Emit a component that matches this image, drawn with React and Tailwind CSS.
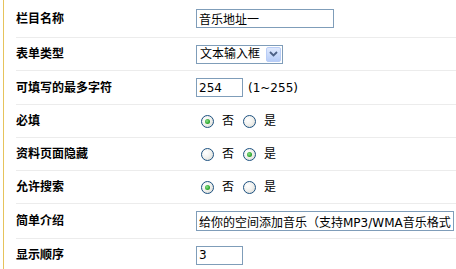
import React from "react";

const FONT = { fontFamily: '"DejaVu Sans", "Noto Sans CJK SC", sans-serif' };

function Radio({ checked }) {
  return (
    <span className="relative inline-block w-[13px] h-[13px] rounded-full border border-[#1c5180] bg-[radial-gradient(circle_at_35%_35%,#ffffff_0%,#f2f2ef_45%,#d6d6cf_100%)] shrink-0">
      {checked && (
        <span className="absolute left-[3px] top-[3px] w-[5px] h-[5px] rounded-full bg-[radial-gradient(circle_at_40%_40%,#8ee08e_0%,#2fa82f_60%,#1d8a1d_100%)]" />
      )}
    </span>
  );
}

function RadioPair({ yes }) {
  return (
    <div className="flex items-center text-[12px] text-black pl-[5px]">
      <Radio checked={!yes} />
      <span className="ml-[8px]">否</span>
      <span className="ml-[9px] flex"><Radio checked={yes} /></span>
      <span className="ml-[8px]">是</span>
    </div>
  );
}

function TextInput({ value, w }) {
  return (
    <input
      readOnly
      value={value}
      className={`h-[19px] border border-[#7f9db9] bg-white px-[2px] text-[12px] text-black outline-none ${w}`}
      style={FONT}
    />
  );
}

function Row({ h, label, children }) {
  return (
    <div className={`flex items-center border-b border-[#ececec] ${h}`}>
      <div className="w-[180px] shrink-0 font-bold text-[12px] text-black">{label}</div>
      <div className="flex items-center min-w-0">{children}</div>
    </div>
  );
}

export default function App() {
  return (
    <div className="w-[456px] h-[269px] overflow-hidden bg-white" style={FONT}>
      <div className="ml-[3px] h-full border-l border-[#e6c35c] pl-[12px]">
        <Row h="h-[38px]" label="栏目名称">
          <TextInput value="音乐地址一" w="w-[138px]" />
        </Row>
        <Row h="h-[33px]" label="表单类型">
          <div className="flex items-center h-[19px] w-[87px] border border-[#7f9db9] bg-white">
            <span className="flex-1 pl-[3px] text-[12px] text-black leading-none">文本输入框</span>
            <span className="mr-[1px] flex items-center justify-center w-[15px] h-[15px] rounded-[2px] border border-[#b9cdf6] bg-[linear-gradient(#dfe9fd,#b7cdf8)]">
              <svg width="9" height="6" viewBox="0 0 9 6">
                <path d="M1 1 L4.5 4.5 L8 1" stroke="#4d6185" strokeWidth="1.8" fill="none" />
              </svg>
            </span>
          </div>
        </Row>
        <Row h="h-[34px]" label="可填写的最多字符">
          <TextInput value="254" w="w-[47px]" />
          <span className="ml-[5px] text-[12px] text-black">(1~255)</span>
        </Row>
        <Row h="h-[33px]" label="必填">
          <RadioPair yes={false} />
        </Row>
        <Row h="h-[33px]" label="资料页面隐藏">
          <RadioPair yes={true} />
        </Row>
        <Row h="h-[33px]" label="允许搜索">
          <RadioPair yes={false} />
        </Row>
        <Row h="h-[35px]" label="简单介绍">
          <TextInput value="给你的空间添加音乐（支持MP3/WMA音乐格式）" w="w-[258px] h-[20px]" />
        </Row>
        <div className="flex items-center h-[32px]">
          <div className="w-[180px] shrink-0 font-bold text-[12px] text-black">显示顺序</div>
          <TextInput value="3" w="w-[47px]" />
        </div>
      </div>
    </div>
  );
}
